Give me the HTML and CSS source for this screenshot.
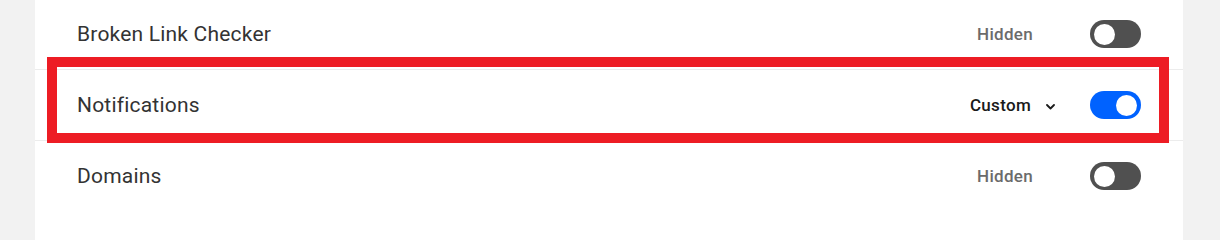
FILE: index.html
```html
<!DOCTYPE html>
<html lang="en">
<head>
<meta charset="utf-8">
<title>Settings</title>
<link rel="stylesheet" href="styles.css">
</head>
<body>
<div class="page">
  <div class="card">
    <div class="row">
      <span class="label">Broken Link Checker</span>
      <div class="controls">
        <span class="status status-hidden">Hidden</span>
        <span class="toggle"><span class="knob"></span></span>
      </div>
    </div>
    <div class="row">
      <span class="label">Notifications</span>
      <div class="controls">
        <span class="status status-custom">Custom
          <svg class="chevron" width="9" height="6" viewBox="0 0 9 6"><path d="M1 1 L4.5 4.5 L8 1" fill="none" stroke="#1a1a1a" stroke-width="1.8" stroke-linecap="round" stroke-linejoin="round"/></svg>
        </span>
        <span class="toggle toggle-on"><span class="knob"></span></span>
      </div>
    </div>
    <div class="row">
      <span class="label">Domains</span>
      <div class="controls">
        <span class="status status-hidden">Hidden</span>
        <span class="toggle"><span class="knob"></span></span>
      </div>
    </div>
  </div>
  <div class="highlight"></div>
</div>
</body>
</html>
```
FILE: styles.css
```css
html, body {
  margin: 0;
  padding: 0;
  background: #f2f2f2;
  font-family: Roboto, "Liberation Sans", sans-serif;
}
.page {
  position: relative;
  min-height: 100vh;
  overflow: hidden;
}
.card {
  margin: -1px 0 0 35px;
  width: 1148px;
  min-height: calc(100vh + 1px);
  background: #ffffff;
}
.row {
  display: flex;
  align-items: center;
  justify-content: space-between;
  height: 70px;
  padding: 0 42px;
  border-bottom: 1px solid #ececec;
}
.row:last-child {
  border-bottom: none;
}
.label {
  font-size: 21px;
  letter-spacing: 0.2px;
  color: #333333;
}
.controls {
  display: flex;
  align-items: center;
  gap: 35px;
}
.status {
  font-size: 17px;
  letter-spacing: 0.3px;
  font-weight: 500;
  display: flex;
  align-items: center;
}
.status-hidden {
  color: #6b6b6b;
  padding-right: 22px;
}
.status-custom {
  color: #1a1a1a;
}
.chevron {
  margin-left: 15px;
  margin-top: 3px;
}
.toggle {
  position: relative;
  width: 51px;
  height: 28px;
  border-radius: 14px;
  background: #505050;
  box-sizing: border-box;
  padding: 3px 4px;
  display: flex;
  align-items: center;
}
.toggle-on {
  background: #0062ff;
  justify-content: flex-end;
}
.knob {
  width: 21px;
  height: 21px;
  border-radius: 50%;
  background: #ffffff;
}
.highlight {
  position: absolute;
  left: 47px;
  top: 57px;
  width: 1122px;
  height: 86px;
  box-sizing: border-box;
  border: 10px solid #ed1c24;
}
```
